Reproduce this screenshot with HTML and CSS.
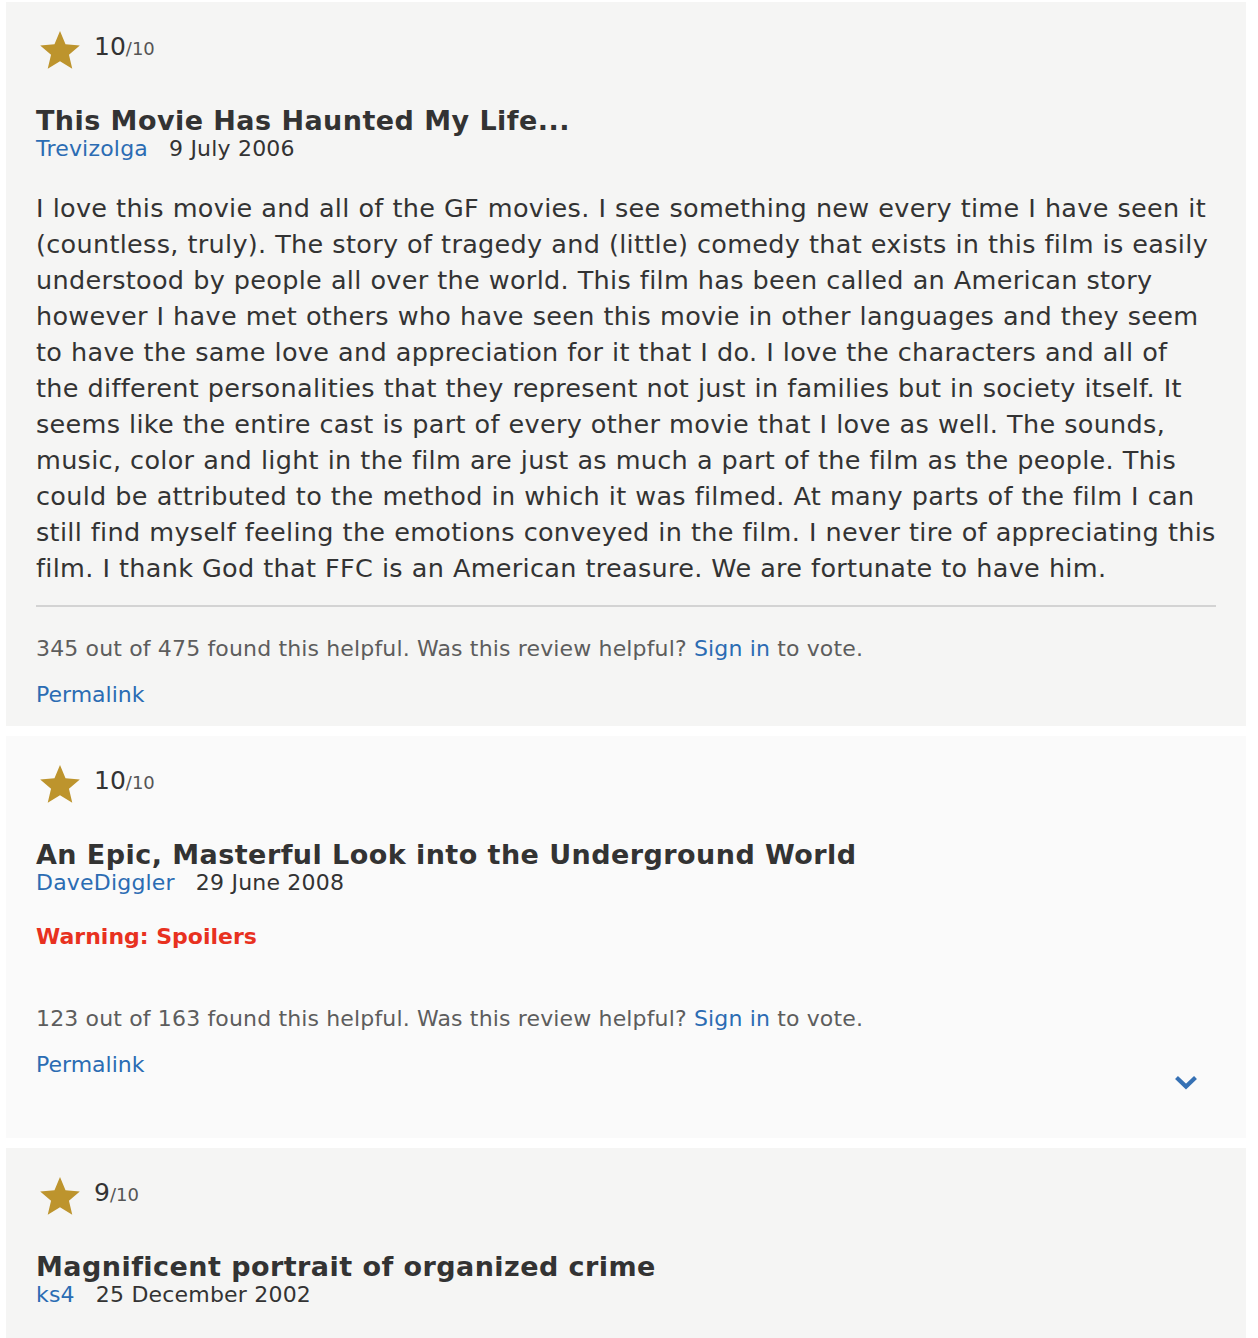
FILE: index.html
```html
<!DOCTYPE html>
<html lang="en">
<head>
<meta charset="utf-8">
<title>User Reviews</title>
<link rel="stylesheet" href="styles.css">
</head>
<body>
<div class="reviews">

  <div class="review review-odd">
    <div class="rating">
      <svg class="star" viewBox="1 1.6 22 21" aria-hidden="true"><path d="M12 1.6l3.05 7.3 7.9.65-6 5.2 1.83 7.7L12 18.3l-6.78 4.15 1.83-7.7-6-5.2 7.9-.65z"/></svg>
      <span class="rating-value"><span class="score">10</span><span class="scale">/10</span></span>
    </div>
    <a class="title">This Movie Has Haunted My Life...</a>
    <div class="byline"><a class="author">Trevizolga</a><span class="date">9 July 2006</span></div>
    <div class="content">
      <p class="text">I love this movie and all of the GF movies. I see something new every time I have seen it (countless, truly). The story of tragedy and (little) comedy that exists in this film is easily understood by people all over the world. This film has been called an American story however I have met others who have seen this movie in other languages and they seem to have the same love and appreciation for it that I do. I love the characters and all of the different personalities that they represent not just in families but in society itself. It seems like the entire cast is part of every other movie that I love as well. The sounds, music, color and light in the film are just as much a part of the film as the people. This could be attributed to the method in which it was filmed. At many parts of the film I can still find myself feeling the emotions conveyed in the film. I never tire of appreciating this film. I thank God that FFC is an American treasure. We are fortunate to have him.</p>
      <div class="actions">345 out of 475 found this helpful. Was this review helpful? <a class="link">Sign in</a> to vote.</div>
      <a class="permalink">Permalink</a>
    </div>
  </div>

  <div class="review review-even">
    <div class="rating">
      <svg class="star" viewBox="1 1.6 22 21" aria-hidden="true"><path d="M12 1.6l3.05 7.3 7.9.65-6 5.2 1.83 7.7L12 18.3l-6.78 4.15 1.83-7.7-6-5.2 7.9-.65z"/></svg>
      <span class="rating-value"><span class="score">10</span><span class="scale">/10</span></span>
    </div>
    <a class="title">An Epic, Masterful Look into the Underground World</a>
    <div class="byline"><a class="author">DaveDiggler</a><span class="date">29 June 2008</span></div>
    <div class="content spoiler">
      <span class="spoiler-warning">Warning: Spoilers</span>
      <div class="actions">123 out of 163 found this helpful. Was this review helpful? <a class="link">Sign in</a> to vote.</div>
      <a class="permalink">Permalink</a>
    </div>
    <button class="expander" aria-label="Expand review">
      <svg viewBox="0 0 24 16" aria-hidden="true"><path d="M2.5 3.5 12 12.5 21.5 3.5"/></svg>
    </button>
  </div>

  <div class="review review-odd review-last">
    <div class="rating">
      <svg class="star" viewBox="1 1.6 22 21" aria-hidden="true"><path d="M12 1.6l3.05 7.3 7.9.65-6 5.2 1.83 7.7L12 18.3l-6.78 4.15 1.83-7.7-6-5.2 7.9-.65z"/></svg>
      <span class="rating-value"><span class="score">9</span><span class="scale">/10</span></span>
    </div>
    <a class="title">Magnificent portrait of organized crime</a>
    <div class="byline"><a class="author">ks4</a><span class="date">25 December 2002</span></div>
  </div>

</div>
</body>
</html>
```
FILE: styles.css
```css
html, body {
  margin: 0;
  padding: 0;
  background: #ffffff;
}

body {
  font-family: "DejaVu Sans", Verdana, sans-serif;
  color: #333333;
}

.reviews {
  display: flex;
  flex-direction: column;
  gap: 10px;
  padding: 2px 12px 0 6px;
}

.review {
  position: relative;
  padding: 29px 30px 18px 30px;
}

.review-odd {
  background: #f5f5f4;
}

.review-even {
  background: #fafafa;
}

.review-last {
  padding-bottom: 40px;
}

.rating {
  display: flex;
  align-items: center;
  height: 37px;
}

.star {
  width: 40px;
  height: 38px;
  margin-left: 4px;
  margin-right: 14px;
  fill: #bd942d;
}

.rating-value {
  position: relative;
  top: -2px;
  font-size: 25px;
  line-height: 29px;
}

.score {
  color: #333;
}

.scale {
  font-size: 18px;
  color: #555;
}

.title {
  display: block;
  margin-top: 38px;
  font-size: 27px;
  line-height: 30px;
  font-weight: bold;
  letter-spacing: 0.45px;
  color: #333;
}

.byline {
  display: flex;
  gap: 21px;
  margin-top: 0;
  font-size: 22px;
  line-height: 26px;
  letter-spacing: 0.2px;
}

.author {
  color: #2b6cb3;
}

.date {
  color: #333;
}

.content {
  margin-top: 28px;
}

.text {
  margin: 0;
  font-size: 25.5px;
  line-height: 36px;
  letter-spacing: 0.3px;
  word-spacing: 0.4px;
  color: #333;
  padding-bottom: 19px;
  border-bottom: 2px solid #d3d3d3;
}

.actions {
  margin-top: 29px;
  font-size: 22px;
  line-height: 26px;
  letter-spacing: 0.15px;
  color: #5d5d5d;
}

.link,
.permalink {
  color: #2b6cb3;
}

.permalink {
  display: block;
  margin-top: 20px;
  font-size: 22px;
  line-height: 26px;
}

.spoiler {
  padding-bottom: 42px;
}

.spoiler-warning {
  display: block;
  margin-top: 26px;
  font-size: 22px;
  line-height: 26px;
  font-weight: bold;
  color: #e8311f;
}

.spoiler .actions {
  margin-top: 56px;
}

.expander {
  position: absolute;
  right: 48px;
  bottom: 48px;
  width: 24px;
  height: 16px;
  padding: 0;
  border: 0;
  background: none;
}

.expander svg {
  display: block;
  width: 24px;
  height: 16px;
  fill: none;
  stroke: #3671b4;
  stroke-width: 4.2;
}
```
